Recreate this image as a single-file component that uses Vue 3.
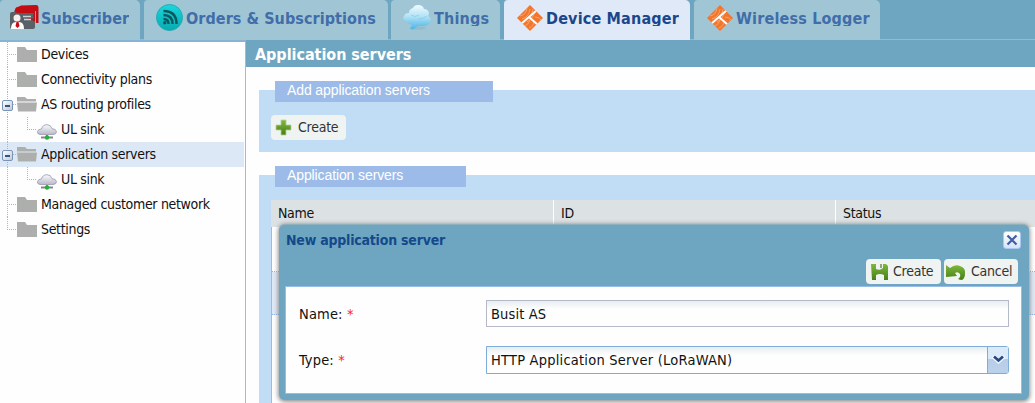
<script setup>
const tabs = [
  { label: 'Subscriber', icon: 'card', cls: 'subscriber' },
  { label: 'Orders & Subscriptions', icon: 'feed', cls: 'orders' },
  { label: 'Things', icon: 'bubble', cls: 'things' },
  { label: 'Device Manager', icon: 'diamond', cls: 'device active' },
  { label: 'Wireless Logger', icon: 'diamond', cls: 'logger' },
]
const nodes = [
  { label: 'Devices', icon: 'folder' },
  { label: 'Connectivity plans', icon: 'folder' },
  { label: 'AS routing profiles', icon: 'open', toggle: true },
  { label: 'UL sink', icon: 'cloud', child: true },
  { label: 'Application servers', icon: 'open', toggle: true, selected: true },
  { label: 'UL sink', icon: 'cloud', child: true },
  { label: 'Managed customer network', icon: 'folder' },
  { label: 'Settings', icon: 'folder', last: true },
]
</script>

<template>
  <div class="app">
    <svg class="defs" width="0" height="0">
      <defs>
        <linearGradient id="teal" x2="0" y2="1"><stop stop-color="#19d8dc" /><stop offset="1" stop-color="#08a9b0" /></linearGradient>
        <linearGradient id="sky" x2="0" y2="1"><stop stop-color="#f2fbff" /><stop offset=".45" stop-color="#b5e3f6" /><stop offset="1" stop-color="#49b4e6" /></linearGradient>
        <linearGradient id="green" x2="0" y2="1"><stop stop-color="#7fb83a" /><stop offset="1" stop-color="#467f18" /></linearGradient>
        <linearGradient id="mist" x2="0" y2="1"><stop stop-color="#fbfbff" /><stop offset="1" stop-color="#b9b9c9" /></linearGradient>
        <clipPath id="rhomb"><path d="M13 0 26 13 13 26 0 13z" /></clipPath>
      </defs>
    </svg>

    <header class="tabs">
      <div v-for="t in tabs" :key="t.label" class="tab" :class="t.cls">
        <svg v-if="t.icon === 'card'" class="ticon" width="30" height="27" viewBox="0 0 30 27">
          <path d="M5 5 6 2.500 9 1.500 11 .5 26 0q2.500 0 2.500 3v15h-4V6z" fill="#c50c12" />
          <path d="M2 7h21q2 0 2 2v13q0 2-2 2H2q-2 0-2-2V9q0-2 2-2z" fill="#596166" />
          <path d="M4 6.500 6 3H23l3 4v10" fill="#c50c12" />
          <path d="M25.500 6v13" stroke="#a0c6d5" stroke-width=".8" />
          <path d="M1 8h22.500v6" fill="#596166" />
          <path d="M13 11.500h8M14 14.500h7" stroke="#c8d4d8" stroke-width="1.500" />
          <circle cx="7" cy="13" r="3.500" fill="#f4eeee" />
          <path d="M1 24q0-7 5-7h3q5 0 5 7z" fill="#fff" />
          <path d="M6.500 17h2l1 4-2 2-2-2z" fill="#c50c12" />
        </svg>
        <svg v-else-if="t.icon === 'feed'" class="ticon" width="27" height="27" viewBox="0 0 27 27">
          <circle cx="13.500" cy="13.500" r="13" fill="url(#teal)" stroke="#2aa8b0" />
          <g fill="none" stroke="#0c5a60" stroke-width="2.500"><path d="M7.500 15q5 0 5 5M7.500 11q9 0 9 9M7.500 7q13 0 13 13" /></g>
          <circle cx="8.800" cy="18.700" r="1.700" fill="#0c5a60" />
        </svg>
        <svg v-else-if="t.icon === 'bubble'" class="ticon" width="28" height="26" viewBox="0 0 28 26">
          <ellipse cx="15" cy="23" rx="8" ry="1.800" fill="#78a9bd" opacity=".35" />
          <path d="M4 17Q-1 15 1 11q1-3 5-3 0-4 4-5 1-3 5-3 5 0 6 4 4 0 5 4 0 2-1 3 4 2 2 6-1 4-7 4l-5 0-5 3.500-3-.5 2-4Q6 20 4 17z" fill="url(#sky)" />
          <path d="M8 10q4 3 8 0M15 14q5 0 9-3" fill="none" stroke="#7cc8ea" opacity=".6" />
        </svg>
        <svg v-else class="ticon" width="26" height="26" viewBox="0 0 26 26">
          <g clip-path="url(#rhomb)">
            <path d="M0 0h26v26H0z" fill="#f2762b" />
            <g fill="none" stroke="#f9ae7c" stroke-width=".8"><path d="M3 11q6-1 7-8M5 14q7-2 8-10M8 15q7-3 8-11M10 17q6-3 8-10M8 21q4-2 5-6M12 23q5-2 5-7M18 12q4 0 6 3" /></g>
            <path d="M4 19 20 5M12 12l9 8" stroke="#fff" stroke-width="2" />
          </g>
        </svg>
        <span class="tlabel">{{ t.label }}</span>
      </div>
    </header>

    <div class="body">
      <nav class="tree">
        <div v-for="(n, i) in nodes" :key="i" class="node" :class="{ child: n.child, selected: n.selected, last: n.last }">
          <span class="gutter"><i v-if="n.toggle" class="toggle"></i></span>
          <svg v-if="n.icon === 'folder'" class="nicon" width="20" height="16" viewBox="0 0 20 16"><path d="M0 0h8l2 3h10v12H0z" fill="#adafad" /></svg>
          <svg v-else-if="n.icon === 'open'" class="nicon" width="20" height="16" viewBox="0 0 20 16"><path d="M0 0h8l2 2h9v2.500H0zM0 5.500h20l-1 9H1z" fill="#adafad" /></svg>
          <svg v-else class="nicon" width="20" height="16" viewBox="0 0 20 16">
            <path d="M10 11v3M4 13.500h12" stroke="#7d8990" stroke-width="2" />
            <path d="M3 10.500Q0 10 .5 7.500 1 5 4.500 5 5.500.7 10 .7q4 0 5 4 4 0 4.500 3 0 2.500-3.500 2.800z" fill="url(#mist)" stroke="#9999ad" stroke-width=".8" />
            <circle cx="10" cy="13.500" r="2.200" fill="#27b035" />
          </svg>
          <span class="nlabel">{{ n.label }}</span>
        </div>
      </nav>

      <main class="main">
        <h1>Application servers</h1>
        <section class="fieldset first">
          <div class="legend l1">Add application servers</div>
          <button class="btn add">
            <svg width="17" height="17" viewBox="0 0 17 17"><path d="M6 1h5v5h5v5h-5v5H6v-5H1V6h5z" fill="url(#green)" stroke="#b5cfa0" stroke-width=".8" /></svg>
            <span>Create</span>
          </button>
        </section>
        <section class="fieldset second">
          <div class="legend l2">Application servers</div>
          <div class="grid">
            <div class="ghead"><span>Name</span><span>ID</span><span>Status</span></div>
            <div class="grow"></div>
            <div class="grow alt"></div>
            <div class="grow rest"></div>
          </div>
        </section>
      </main>
    </div>

    <div class="dialog">
      <div class="dhead">
        <span class="dtitle">New application server</span>
        <span class="close"><svg width="12" height="12" viewBox="0 0 12 12"><path d="m1.500 1.500 9 9m0-9-9 9" stroke="#3f5fa6" stroke-width="2.200" /></svg></span>
      </div>
      <div class="dbar">
        <button class="btn save">
          <svg width="18" height="18" viewBox="0 0 18 18"><path d="M0 1h5v5q4 2 7-1V1h3l2 2v14h-4v-5q-4-2-8 0v5H1z" fill="url(#green)" /><path d="M9 1h2v4H9z" fill="#8ea775" /></svg>
          <span>Create</span>
        </button>
        <button class="btn cancel">
          <svg width="20" height="16" viewBox="0 0 20 16"><path d="M0 1 4 4Q9 0 14 2q6 2 5 8 0 4-3 6-2 0-4-1 3-2 2-5-2-3-5-1l2 3L0 13z" fill="url(#green)" /></svg>
          <span>Cancel</span>
        </button>
      </div>
      <div class="form">
        <div class="field"><label>Name: <b>*</b></label><div class="input">Busit AS</div></div>
        <div class="field"><label>Type: <b>*</b></label>
          <div class="input combo"><span>HTTP Application Server (LoRaWAN)</span>
            <i class="trigger"><svg width="13" height="9" viewBox="0 0 13 9"><path d="m1 1 5.500 5L12 1" fill="none" stroke="#f3f7fd" stroke-width="4.500" /><path d="m2 1.500 4.500 4 4.500-4" fill="none" stroke="#274a87" stroke-width="2.800" /></svg></i>
          </div>
        </div>
      </div>
    </div>
  </div>
</template>

<style>
body { margin: 0; overflow: hidden; }
</style>
<style scoped>
.app { position: relative; width: 1035px; height: 403px; overflow: hidden; background: #fdfefd; color: #111; font: 14px "DejaVu Sans Condensed", "DejaVu Sans", sans-serif; font-stretch: condensed; letter-spacing: -.32px; white-space: nowrap; }
.app * { box-sizing: border-box; }
.defs { position: absolute; }
.tabs { display: flex; height: 40px; background: #6ea6c1; border-bottom: 1px solid #8db9e4; }
.tab { display: flex; height: 40px; background: #a0c6d5; border-radius: 4px 5px 0 0; color: #416da8; font-weight: bold; font-size: 16px; letter-spacing: .1px; }
.tab .ticon { flex: none; margin-top: 5px; }
.tlabel { height: 26px; line-height: 38px; overflow: hidden; }
.active { background: #dfe9f8; color: #1c468b; }
.subscriber { width: 140px; padding-left: 10px; margin-right: 4px; }
.subscriber .tlabel { margin-left: 1px; }
.orders { width: 244px; padding-left: 12px; margin-right: 3px; }
.orders .ticon { margin-top: 4px; }
.orders .tlabel { margin-left: 3px; letter-spacing: .06px; }
.things { width: 109px; padding-left: 12px; margin-right: 4px; }
.things .tlabel { margin-left: 3px; letter-spacing: .2px; }
.device { width: 186px; padding-left: 13px; margin-right: 4px; }
.device .tlabel, .logger .tlabel { margin-left: 3px; letter-spacing: .18px; }
.logger { width: 186px; padding-left: 13px; }
.body { display: flex; height: 363px; }
.tree { width: 246px; border-top: 2px solid #86b3d6; border-right: 1px solid #99bbe8; background: #fdfefd; }
.node { position: relative; display: flex; height: 25px; width: 244px; align-items: center; }
.node.selected { background: #dde8f6; }
.node::before { content: ""; position: absolute; left: 7px; top: 0; height: 25px; border-left: 1px dotted #b5b5b5; }
.node.last::before { height: 13px; }
.node::after { content: ""; position: absolute; left: 9px; top: 12px; width: 7px; border-top: 1px dotted #b5b5b5; }
.gutter { width: 17px; flex: none; position: relative; }
.child .gutter { width: 37px; height: 25px; }
.child .gutter::before { content: ""; position: absolute; left: 27px; top: 0; height: 13px; border-left: 1px dotted #b5b5b5; }
.node.child::after { left: 29px; }
.toggle { position: relative; z-index: 1; display: block; width: 11px; height: 11px; margin: 2px 0 0 2px; border: 1px solid #7994b6; border-radius: 2px; background: linear-gradient(135deg, #fff, #b9cade); }
.toggle::after { content: ""; position: absolute; left: 2px; top: 4px; width: 5px; height: 2px; background: #38547c; }
.nicon { flex: none; margin: 1px 4px 0 0; }
.child .nicon { margin-top: 4px; }
.nlabel { line-height: 25px; }
.main { flex: 1; min-width: 0; }
h1 { margin: 0; height: 27px; background: #6ea6c1; color: #fff; font-size: 16px; line-height: 30px; padding-left: 9px; letter-spacing: -.04px; }
.fieldset { margin-left: 13px; background: #c1dcf5; }
.first { height: 62px; margin-top: 23px; }
.second { height: 240px; margin-top: 23px; }
.legend { position: relative; top: -9px; height: 21px; margin-left: 16px; padding-left: 12px; background: #9cbbe8; color: #fff; font: 14px/19px "Liberation Sans", Arial, sans-serif; letter-spacing: -.11px; }
.l1 { width: 218px; }
.l2 { width: 191px; }
.btn { display: flex; align-items: center; border: 0; border-radius: 4px; height: 25px; padding: 0 0 2px; background: #eff3f1; color: #333; font: inherit; font-stretch: condensed; letter-spacing: -.25px; }
.btn svg { flex: none; position: relative; top: 1px; }
.add { width: 75px; margin: 4px 0 0 12px; padding-left: 4px; gap: 6px; }
.grid { margin: 4px 0 0 12px; overflow: hidden; }
.ghead { display: flex; height: 27px; background: #dce1e3; line-height: 26px; }
.ghead span { flex: none; width: 283px; padding-left: 7px; border-right: 1px solid #fff; }
.ghead span + span { width: 282px; padding-left: 7px; }
.grow { height: 45px; border-left: 1px solid #99bbe8; border-bottom: 1px dotted #8eb3e6; background: #fdfefd; }
.grow.alt { height: 43px; background: #dfe8f6; }
.grow.rest { height: 120px; }
.dialog { position: absolute; left: 279px; top: 224px; width: 750px; height: 176px; padding: 0 7px 6px 6px; border-radius: 6px; background: #6ea6c1; border-top: 1px solid #8fb0bd; box-shadow: 0 1px 4px 1px #777c; }
.dhead { display: flex; justify-content: space-between; height: 34px; }
.dtitle { color: #15498b; font-weight: bold; line-height: 31px; padding-left: 1px; letter-spacing: -.22px; }
.close { display: grid; place-items: center; width: 18px; height: 18px; margin: 6px 1px 0 0; border: 1px solid #a9c9f3; border-radius: 3px; background: linear-gradient(#fff, #d7e4f6); }
.dbar { display: flex; justify-content: flex-end; gap: 3px; height: 27px; padding-right: 4px; }
.save { width: 75px; padding-left: 5px; gap: 4px; }
.cancel { width: 74px; padding-left: 2px; gap: 5px; }
.form { height: 108px; padding: 13px 12px 0 12px; border: 1px solid #99bbe8; background: #fdfefd; font-size: 14.5px; letter-spacing: .15px; }
.field { display: flex; align-items: flex-start; height: 46px; }
.field label { flex: none; width: 188px; line-height: 28px; padding-left: 1px; }
.field b { font-weight: normal; color: #f22; }
.input { display: flex; flex: none; width: 523px; height: 27px; padding-left: 4px; border: 1px solid #b5b8c8; background: linear-gradient(#e7edf0, #fdfefd 8px); line-height: 27px; }
.combo { height: 28px; justify-content: space-between; border-color: #7eadd9; border-radius: 0 3px 3px 0; letter-spacing: .22px; }
.trigger { width: 21px; height: 26px; border-left: 1px solid #7eadd9; display: grid; place-items: center; padding-bottom: 2px; background: linear-gradient(#dce9f9 0 46%, #b7cce8 46%, #bcd1eb); }
</style>
